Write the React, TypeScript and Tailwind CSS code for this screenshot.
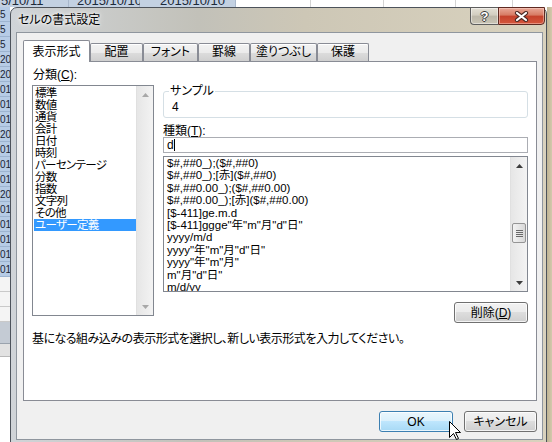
import React from 'react';

const categories = ['標準', '数値', '通貨', '会計', '日付', '時刻', 'パーセンテージ', '分数', '指数', '文字列', 'その他', 'ユーザー定義'];

const formats = [
  '$#,##0_);($#,##0)',
  '$#,##0_);[赤]($#,##0)',
  '$#,##0.00_);($#,##0.00)',
  '$#,##0.00_);[赤]($#,##0.00)',
  '[$-411]ge.m.d',
  '[$-411]ggge"年"m"月"d"日"',
  'yyyy/m/d',
  'yyyy"年"m"月"d"日"',
  'yyyy"年"m"月"',
  'm"月"d"日"',
  'm/d/yy',
];

const tabs = [
  { label: '表示形式', w: 'w-[67px]' },
  { label: '配置', w: 'w-[53px]' },
  { label: 'フォント', w: 'w-[55px]' },
  { label: '罫線', w: 'w-[52px]' },
  { label: '塗りつぶし', w: 'w-[67px]' },
  { label: '保護', w: 'w-[52px]' },
];

const leftRows = ['5', '5', '5', '20', '20', '01', '01', '01', '20', '01', '01', '01', '20', '01', '01', '01', '01', '01'];

function Arrow({ down, disabled }: { down?: boolean; disabled?: boolean }) {
  return (
    <svg width="7" height="4" viewBox="0 0 7 4" className={down ? 'rotate-180' : ''}>
      <polygon points="0,4 3.5,0 7,4" fill={disabled ? '#a8a8a8' : '#3c3c3c'} />
    </svg>
  );
}

function ScrollBar({ disabled, thumbTop }: { disabled?: boolean; thumbTop?: string }) {
  return (
    <div className="w-[17px] shrink-0 flex flex-col bg-[linear-gradient(90deg,#e6e6e6,#f3f3f3)] border-l border-[#e0e0e0]">
      <div className="h-[17px] flex items-center justify-center">
        <Arrow disabled={disabled} />
      </div>
      <div className="flex-1 flex flex-col">
        {!disabled && (
          <div className={`${thumbTop} mx-[1px] h-[20px] rounded-[2px] border border-[#959595] bg-[linear-gradient(90deg,#f3f3f3,#e6e6e6_50%,#d8d8d8)] flex flex-col items-center justify-center gap-[1px]`}>
            <div className="w-[7px] h-px bg-[#6a6a6a]" />
            <div className="w-[7px] h-px bg-[#6a6a6a]" />
            <div className="w-[7px] h-px bg-[#6a6a6a]" />
            <div className="w-[7px] h-px bg-[#6a6a6a]" />
          </div>
        )}
      </div>
      <div className="h-[17px] flex items-center justify-center">
        <Arrow down disabled={disabled} />
      </div>
    </div>
  );
}

function Button({ children, primary, className }: { children: React.ReactNode; primary?: boolean; className: string }) {
  return (
    <div
      className={`${className} h-[21px] flex items-center justify-center rounded-[3px] border text-[12px] leading-[14px] shadow-[inset_0_0_0_1px_rgba(255,255,255,0.75)] ${
        primary
          ? 'border-[#3c7fb1] bg-[linear-gradient(#eaf6fd,#d9f0fc_50%,#bee6fd_50%,#a7d9f5)]'
          : 'border-[#707070] bg-[linear-gradient(#f2f2f2,#ebebeb_50%,#dddddd_50%,#cfcfcf)]'
      }`}
    >
      {children}
    </div>
  );
}

function TopStrip() {
  return (
    <div className="h-[7px] flex overflow-hidden text-[13px] leading-[13px] text-[#1d2a3a]">
      <div className="w-[69px] bg-[#c3d1e2] border-r border-[#a9b8cc]">
        <div className="-mt-[6px] pl-[1px]">5/10/11</div>
      </div>
      <div className="w-[71px] bg-[#c3d1e2] border-r border-[#a9b8cc]">
        <div className="-mt-[6px] pl-[8px]">2015/10/10</div>
      </div>
      <div className="w-[96px] bg-[#c3d1e2] border-r border-[#a9b8cc]">
        <div className="-mt-[6px] pl-[20px]">2015/10/10</div>
      </div>
      <div className="w-[75px] border-r border-[#d4d4d4]" />
      <div className="w-[73px] border-r border-[#d4d4d4]" />
      <div className="w-[72px] border-r border-[#d4d4d4]" />
      <div className="w-[57px] border-r border-[#d4d4d4]" />
      <div className="flex-1" />
    </div>
  );
}

function LeftStrip() {
  return (
    <div className="w-[10px] shrink-0 flex flex-col overflow-hidden text-[10px] leading-[14px] text-[#1a2535]">
      {leftRows.map((r, i) => (
        <div key={i} className="h-[15px] shrink-0 bg-[#b7cce6] border-b border-[#9db4d0] pt-[1px]">
          {r}
        </div>
      ))}
      <div className="h-[15px] shrink-0 bg-[#f4f4f4] border-b border-[#c9c9c9]" />
      <div className="h-[15px] shrink-0 bg-[#f4f4f4] border-b border-[#c9c9c9]" />
      <div className="h-[15px] shrink-0 bg-[#f4f4f4] border-b border-[#c9c9c9]" />
      <div className="h-[22px] shrink-0 bg-[#c4cbd4] border-b border-[#9aa3ad]" />
      <div className="h-[13px] shrink-0 bg-[#e2e2e2] border-b border-[#b9b9b9]" />
      <div className="flex-1 bg-[#f6f6f6]" />
    </div>
  );
}

function TitleBar() {
  return (
    <div className="h-[24px] shrink-0 flex items-start">
      <div className="pl-[7px] pt-[5px] text-[12px] leading-[14px] text-black [text-shadow:0_0_6px_#ffffff,0_0_3px_#ffffff]">
        セルの書式設定
      </div>
      <div className="ml-auto mr-[1px] -mt-px flex">
        <div className="w-[28px] h-[18px] rounded-bl-[4px] border border-r-0 border-[#5e5e5e] bg-[linear-gradient(#e4e0d5,#d2cdc0_45%,#bcb7a9_50%,#c9c4b5)] shadow-[inset_0_0_0_1px_rgba(255,255,255,0.45)] flex items-center justify-center">
          <span className="font-['Liberation_Sans',sans-serif] font-bold text-[13px] leading-[13px] text-white [text-shadow:1px_0_#3a3a3a,-1px_0_#3a3a3a,0_1px_#3a3a3a,0_-1px_#3a3a3a]">
            ?
          </span>
        </div>
        <div className="w-[47px] h-[18px] rounded-br-[4px] border border-[#5e2a22] bg-[linear-gradient(#e9a897,#d77a63_45%,#c4412b_50%,#d5573d)] shadow-[inset_0_0_0_1px_rgba(255,220,210,0.45)] flex items-center justify-center">
          <svg width="15" height="11" viewBox="0 0 15 11">
            <path d="M3 2 L12 9 M12 2 L3 9" stroke="#4a2a25" strokeWidth="4.2" strokeLinecap="round" />
            <path d="M3 2 L12 9 M12 2 L3 9" stroke="#ffffff" strokeWidth="2.2" strokeLinecap="round" />
          </svg>
        </div>
      </div>
    </div>
  );
}

function Panel() {
  return (
    <div className="h-[340px] shrink-0 bg-white border border-[#898c95] flex flex-col px-[8px] pt-[7px] text-[12px] leading-[12px] text-black">
      <div className="flex gap-[9px]">
        <div className="w-[122px] flex flex-col">
          <div className="pl-[1px] h-[12px]">
            分類(<span className="underline">C</span>):
          </div>
          <div className="mt-[4px] h-[231px] border border-[#828790] flex">
            <div className="flex-1 pl-[1px] pt-[1px] flex flex-col text-[11.5px] tracking-[-0.7px]">
              {categories.map((c, i) => (
                <div
                  key={c}
                  className={`h-[12px] pl-[1px] whitespace-nowrap ${i === categories.length - 1 ? 'bg-[#3399ff] text-white' : ''}`}
                >
                  {c}
                </div>
              ))}
            </div>
            <ScrollBar disabled />
          </div>
        </div>
        <div className="flex-1 flex flex-col">
          <fieldset className="mt-[15px] h-[34px] border border-[#d5dfe5] rounded-[3px] px-[5px]">
            <legend className="px-[1px] leading-[14px]">サンプル</legend>
            <div className="pl-[3px] pt-[3px]">4</div>
          </fieldset>
          <div className="mt-[7px] h-[12px]">
            種類(<span className="underline">T</span>):
          </div>
          <div className="h-[16px] border border-[#abadb3] flex items-center pl-[3px]">
            <span>d</span>
            <div className="w-px h-[12px] bg-black" />
          </div>
          <div className="mt-[3px] h-[136px] border border-[#828790] flex">
            <div className="flex-1 pl-[3px] flex flex-col text-[11.5px] leading-[12.4px] overflow-hidden">
              {formats.map((f) => (
                <div key={f} className="whitespace-nowrap">
                  {f}
                </div>
              ))}
            </div>
            <ScrollBar thumbTop="mt-[49px]" />
          </div>
          <div className="mt-[10px] flex justify-end">
            <Button className="w-[74px]">
              削除(<span className="underline">D</span>)
            </Button>
          </div>
        </div>
      </div>
      <div className="mt-[10px] whitespace-nowrap tracking-[-0.5px]">
        基になる組み込みの表示形式を選択し、新しい表示形式を入力してください。
      </div>
    </div>
  );
}

function Dialog() {
  return (
    <div className="w-[537px] h-[440px] shrink-0 rounded-t-[7px] border border-[#4d535b] bg-[linear-gradient(90deg,#d0d4d8,#c2c1b9_35%,#cdc7b6_55%,#d9d2be)] flex flex-col">
      <TitleBar />
      <div className="ml-[5px] mr-[3px] h-[408px] shrink-0 border border-[#8f969e] bg-[#f0f0f0] flex flex-col pl-[6px] pr-[5px] pt-[7px]">
        <div className="h-[21px] shrink-0 flex items-end relative z-10 text-[12px] leading-[14px]">
          {tabs.map((t, i) =>
            i === 0 ? (
              <div
                key={t.label}
                className={`${t.w} h-[22px] -mb-px bg-white border border-b-0 border-[#898c95] rounded-t-[2px] pt-[4px] text-center`}
              >
                {t.label}
              </div>
            ) : (
              <div
                key={t.label}
                className={`${t.w} h-[18px] border border-b-0 border-[#898c95] rounded-t-[2px] pt-[1px] text-center bg-[linear-gradient(#f3f3f3,#ebebeb_50%,#dddddd_50%,#cfcfcf)] shadow-[inset_0_1px_0_#ffffff]`}
              >
                {t.label}
              </div>
            )
          )}
        </div>
        <Panel />
        <div className="mt-[10px] flex justify-end gap-[11px]">
          <Button primary className="w-[74px]">
            OK
          </Button>
          <Button className="w-[73px]">キャンセル</Button>
        </div>
      </div>
    </div>
  );
}

export default function App() {
  return (
    <div className="relative w-[552px] h-[442px] overflow-hidden bg-white font-['Liberation_Sans','Noto_Sans_CJK_JP',sans-serif] [font-feature-settings:'palt']">
      <TopStrip />
      <div className="flex items-start h-[435px]">
        <LeftStrip />
        <Dialog />
        <div className="flex-1 h-full bg-[linear-gradient(90deg,#bfb493,#d3c9ad)]" />
      </div>
      <svg className="absolute left-[449px] top-[421px]" width="13" height="20" viewBox="0 0 13 20">
        <polygon
          points="0.5,0.5 0.5,16.5 4.5,12.5 7.5,18.5 9.5,17.5 6.5,11.5 11.5,11.5"
          fill="#ffffff"
          stroke="#000000"
          strokeWidth="1"
          strokeLinejoin="miter"
        />
      </svg>
    </div>
  );
}
